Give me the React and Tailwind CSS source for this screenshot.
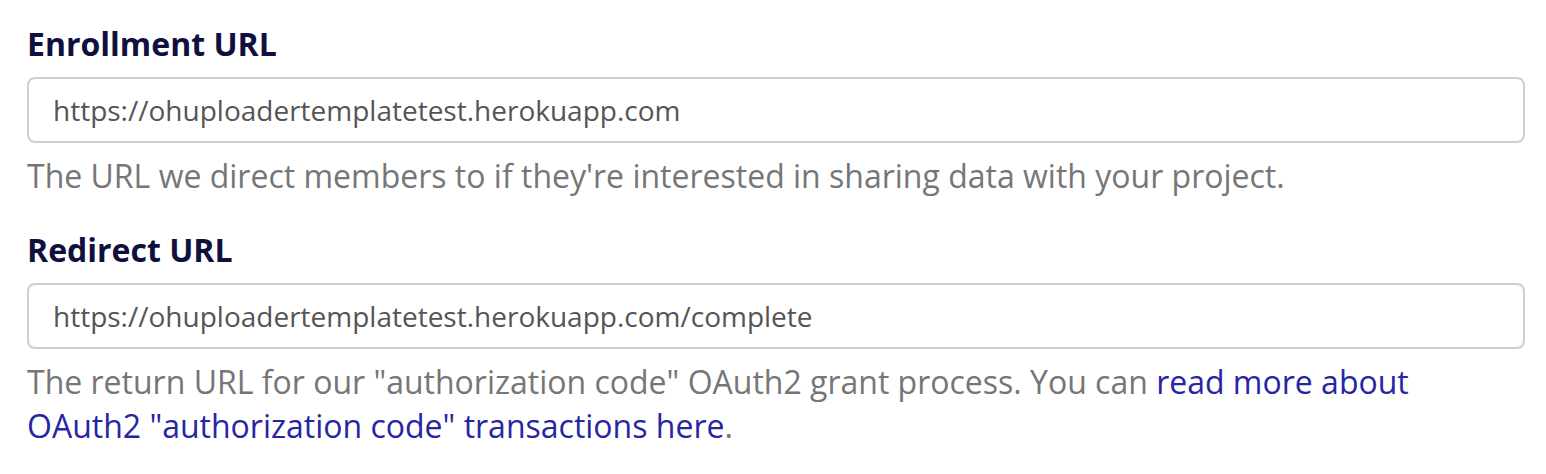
import React from 'react';

const Field = ({ label, value, children }) => (
  <div>
    <label className="block text-[32px] font-bold leading-[40px] text-[#10103f]">{label}</label>
    <input
      type="text"
      readOnly
      value={value}
      className="mt-[13px] block h-[66px] w-full rounded-[8px] border-2 border-[#cfcfcf] bg-white px-[24px] text-[28px] text-[#555555] outline-none"
    />
    <p className="mt-[11px] text-[32px] leading-[44px] text-[#767676]">{children}</p>
  </div>
);

export default function App() {
  return (
    <div className="min-h-screen bg-white pl-[27px] pr-[21px] pt-[24px]" style={{ fontFamily: '"Open Sans", sans-serif' }}>
      <div className="flex flex-col gap-[32px]">
        <Field label="Enrollment URL" value="https://ohuploadertemplatetest.herokuapp.com">
          The URL we direct members to if they're interested in sharing data with your project.
        </Field>
        <Field label="Redirect URL" value="https://ohuploadertemplatetest.herokuapp.com/complete">
          The return URL for our "authorization code" OAuth2 grant process. You can{' '}
          <a href="#" className="text-[#2626a3]">
            read more about OAuth2 "authorization code" transactions here
          </a>
          .
        </Field>
      </div>
    </div>
  );
}
